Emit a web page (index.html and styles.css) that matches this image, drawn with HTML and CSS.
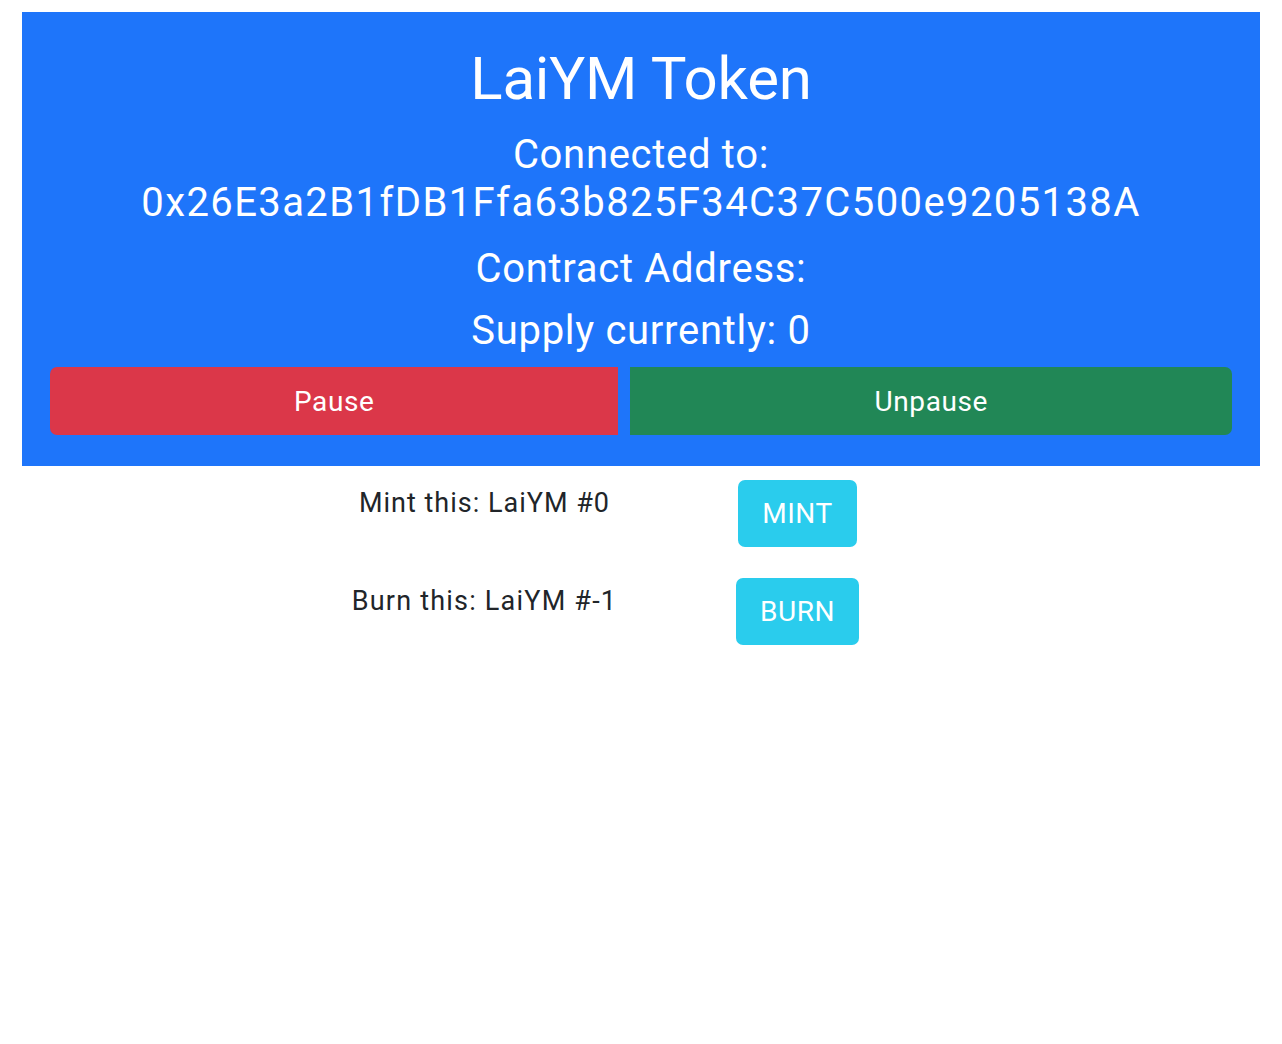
FILE: index.html
```html
<!DOCTYPE html>
<html lang="en">
<head>
<meta charset="utf-8">
<title>LaiYM Token</title>
<link rel="stylesheet" href="styles.css">
</head>
<body>
<div class="page">
  <header class="hero">
    <h1 class="title">LaiYM Token</h1>
    <p class="info info-connected">Connected to:<br><span class="address">0x26E3a2B1fDB1Ffa63b825F34C37C500e9205138A</span></p>
    <p class="info info-contract">Contract Address:</p>
    <p class="info info-supply">Supply currently: 0</p>
    <div class="btn-group">
      <button class="btn btn-pause">Pause</button>
      <button class="btn btn-unpause">Unpause</button>
    </div>
  </header>
  <div class="action-row action-mint">
    <div class="action-label">Mint this: LaiYM #0</div>
    <div class="action-cell"><button class="btn-action">MINT</button></div>
  </div>
  <div class="action-row">
    <div class="action-label label-burn">Burn this: LaiYM #-1</div>
    <div class="action-cell"><button class="btn-action">BURN</button></div>
  </div>
</div>
</body>
</html>
```
FILE: styles.css
```css
* { box-sizing: border-box; }
html, body { margin: 0; padding: 0; background: #fff; }
body {
  font-family: Roboto, "Noto Sans", "Liberation Sans", sans-serif;
  color: #212529;
}
.page { padding: 12px 22px 0 22px; }
.hero {
  background: #1e75fa;
  color: #fff;
  text-align: center;
  padding: 31px 28px 31px 28px;
}
.title {
  margin: 0 0 16px 0;
  font-size: 60px;
  line-height: 72px;
  font-weight: 400;
  letter-spacing: -0.2px;
}
.info {
  margin: 0;
  font-size: 40px;
  line-height: 48px;
  letter-spacing: 0.7px;
}
.address { letter-spacing: 1.4px; }
.info-connected { margin-bottom: 18px; }
.info-contract { margin-bottom: 14px; }
.info-supply { margin-bottom: 12px; }
.btn-group {
  display: flex;
  gap: 12px;
}
.btn {
  flex: 1 1 auto;
  height: 68px;
  border: 0;
  color: #fff;
  font-family: inherit;
  font-size: 28px;
  letter-spacing: 0.6px;
  padding: 0;
}
.btn-pause { background: #db3749; border-radius: 7px 0 0 7px; }
.btn-unpause { background: #218756; border-radius: 0 7px 7px 0; }
.action-row {
  display: flex;
  justify-content: center;
  margin-bottom: 31px;
}
.action-mint { margin-top: 14px; }
.action-label {
  width: 313px;
  text-align: center;
  font-size: 27px;
  line-height: 36px;
  padding-top: 5px;
  letter-spacing: 1px;
}
.label-burn { letter-spacing: 1.2px; }
.action-cell {
  width: 313px;
  text-align: center;
}
.btn-action {
  background: #2acced;
  color: #fff;
  border: 0;
  border-radius: 7px;
  height: 67px;
  padding: 0 24px;
  font-family: inherit;
  font-size: 28px;
  letter-spacing: 0.5px;
}
```
